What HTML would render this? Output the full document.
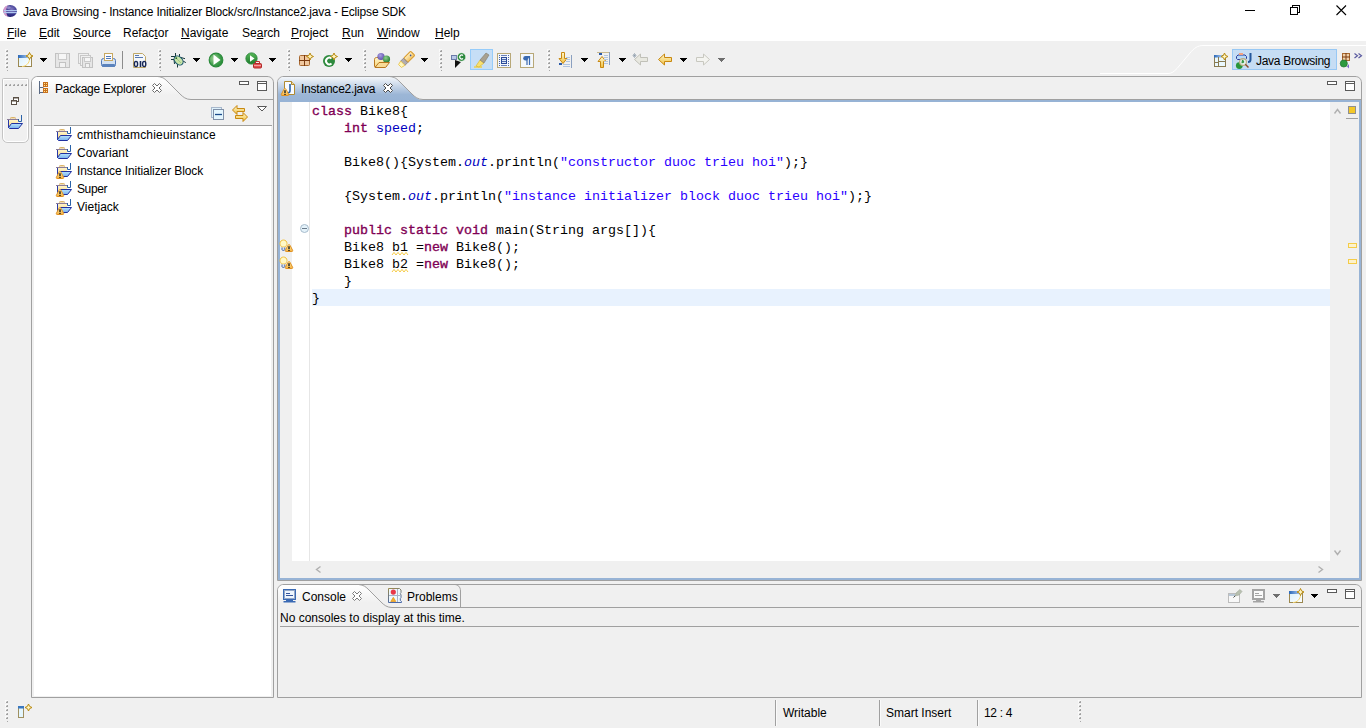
<!DOCTYPE html>
<html><head><meta charset="utf-8">
<style>
*{box-sizing:border-box}
html,body{margin:0;padding:0}
body{width:1366px;height:728px;background:#f0f0f0;position:relative;overflow:hidden;font-family:"Liberation Sans",sans-serif;font-size:12px;color:#000}
.a{position:absolute}
.t{position:absolute;white-space:pre;line-height:14px;height:14px}
.m{position:absolute;white-space:pre;font-family:"Liberation Mono",monospace;font-size:13.333px;line-height:17px;height:17px;color:#000}
.u{text-decoration:underline;text-underline-offset:1px}
.kw{color:#7f0055;-webkit-text-stroke:0.35px #7f0055}
.fld{color:#0000c0}
.str{color:#2a00ff}
.it{font-style:italic}
svg{position:absolute;overflow:visible}
</style></head><body>
<!-- title + menu -->
<div class="a" style="left:0;top:0;width:1366px;height:41px;background:#fff"></div>
<div class="t" id="title" style="left:23px;top:5px;letter-spacing:-0.16px">Java Browsing - Instance Initializer Block/src/Instance2.java - Eclipse SDK</div>

<div class="t" style="left:7px;top:26px"><span class="u">F</span>ile</div>
<div class="t" style="left:39px;top:26px"><span class="u">E</span>dit</div>
<div class="t" style="left:73px;top:26px"><span class="u">S</span>ource</div>
<div class="t" style="left:123px;top:26px">Refac<span class="u">t</span>or</div>
<div class="t" style="left:181px;top:26px"><span class="u">N</span>avigate</div>
<div class="t" style="left:242px;top:26px">Se<span class="u">a</span>rch</div>
<div class="t" style="left:291px;top:26px"><span class="u">P</span>roject</div>
<div class="t" style="left:342px;top:26px"><span class="u">R</span>un</div>
<div class="t" style="left:377px;top:26px"><span class="u">W</span>indow</div>
<div class="t" style="left:435px;top:26px"><span class="u">H</span>elp</div>

<!-- window controls -->
<div class="a" style="left:1245px;top:10px;width:10px;height:1px;background:#000"></div>
<div class="a" style="left:1292px;top:5px;width:8px;height:8px;border:1px solid #000"></div>
<div class="a" style="left:1290px;top:7px;width:8px;height:8px;border:1px solid #000;background:#fff"></div>
<svg style="left:1336px;top:5px" width="10" height="10"><path d="M0.5 0.5L10 10M10 0.5L0.5 10" stroke="#000" stroke-width="1.1"/></svg>

<!-- perspective bar white outline -->
<svg style="left:0;top:0" width="1366" height="80">
<defs><linearGradient id="wl" x1="0" x2="1"><stop offset="0" stop-color="#fff" stop-opacity="0"/><stop offset="1" stop-color="#fff"/></linearGradient></defs>
<path d="M880 73.5H1100" stroke="url(#wl)" fill="none"/>
<path d="M1100 73.5H1168C1172 73.5 1174 71.5 1177 68.5L1190 53C1194 48 1198 45.5 1203 45.5H1366" stroke="#fff" fill="none"/>
</svg>

<!-- VIEWS -->
<svg style="left:0;top:0" width="1366" height="728">
<defs>
<linearGradient id="gw" x1="0" y1="0" x2="0" y2="1"><stop offset="0" stop-color="#fff"/><stop offset="0.15" stop-color="#fdfdfd"/><stop offset="0.8" stop-color="#f0f0f0"/></linearGradient>
<linearGradient id="gb" x1="0" y1="0" x2="0" y2="1"><stop offset="0" stop-color="#f4f7fb"/><stop offset="0.7" stop-color="#9cb6d6"/><stop offset="1" stop-color="#97b3d5"/></linearGradient>
</defs>
<!-- trim stack -->
<path d="M2.5 79.5Q2.5 78.5 3.5 78.5H27.5Q28.5 78.5 28.5 79.5V137C28.5 140.5 26.5 142.5 23 142.5H8C4.5 142.5 2.5 140.5 2.5 137Z" fill="#f0f0f0" stroke="#c4c4c4"/>
<path d="M3.5 79.5H27.5V137C27.5 140 25.5 141.5 23 141.5H8C5.5 141.5 3.5 140 3.5 137Z" fill="none" stroke="#fff"/>

<!-- Package explorer -->
<path d="M31.5 697.5V83C31.5 79 34 76.5 38 76.5H267C271 76.5 273.5 79 273.5 83V697.5Z" fill="#f0f0f0" stroke="#a0a0a0"/>
<path d="M32 100V83C32 79.5 34.5 77 38 77H158C163 77 165 79 168 82L180 94C183 97 186 99 191 99H32Z" fill="url(#gw)"/>
<path d="M157.5 76.5C163 77 165 79 168 82L180 94C183 97 186 99.5 191 99.5H273" fill="none" stroke="#a0a0a0"/>
<rect x="34" y="125" width="237" height="571" fill="#fff"/>
<path d="M34 125.5H272" stroke="#a0a0a0"/>

<!-- Editor -->
<path d="M277.5 580.5V83C277.5 79 280 76.5 284 76.5H1355C1359 76.5 1361.5 79 1361.5 83V580.5Z" fill="#f0f0f0" stroke="#a0a0a0"/>
<path d="M278 102V83C278 79.5 280.5 77 284 77H390C395 77 397 79 400 82L412 94C415 97 418 100 423 100H278Z" fill="url(#gb)"/>
<path d="M389.5 76.5C395 77 397 79 400 82L412 94C415 97 418 99.5 423 99.5H1361" fill="none" stroke="#a0a0a0"/>
<rect x="278" y="100" width="1083" height="2" fill="#97b3d5"/>
<rect x="278" y="100" width="2" height="480" fill="#97b3d5"/>
<rect x="1359" y="100" width="2" height="480" fill="#97b3d5"/>
<rect x="278" y="578" width="1083" height="2" fill="#97b3d5"/>
<rect x="292" y="102" width="1038" height="459" fill="#fff"/>
<rect x="309" y="102" width="1" height="459" fill="#e6e6e6"/>
<rect x="312" y="289" width="1018" height="17" fill="#e8f2fe"/>

<!-- Console -->
<path d="M277.5 697.5V591C277.5 587 280 584.5 284 584.5H1355C1359 584.5 1361.5 587 1361.5 591V697.5Z" fill="#f0f0f0" stroke="#a0a0a0"/>
<path d="M278 607V591C278 587.5 280.5 585 284 585H359C364 585 366 587 369 590L381 602C384 605 387 607 392 607H278Z" fill="url(#gw)"/>
<path d="M358.5 584.5C364 585 366 587 369 590L381 602C384 605 387 607.5 392 607.5H1361" fill="none" stroke="#a0a0a0"/>
<path d="M380 584.5H454.5C458 584.5 460.5 587 460.5 591V607" fill="none" stroke="#a0a0a0"/>
<path d="M280 626.5H1359" stroke="#a0a0a0"/>
</svg>

<div class="t" style="left:55px;top:82px;letter-spacing:-0.25px">Package Explorer</div>

<!-- tree -->
<div class="t" style="left:77px;top:128px;letter-spacing:0.18px">cmthisthamchieuinstance</div>
<div class="t" style="left:77px;top:146px">Covariant</div>
<div class="t" style="left:77px;top:164px;letter-spacing:-0.1px">Instance Initializer Block</div>
<div class="t" style="left:77px;top:182px;letter-spacing:-0.4px">Super</div>
<div class="t" style="left:77px;top:200px">Vietjack</div>

<div class="t" style="left:301px;top:82px;letter-spacing:-0.22px">Instance2.java</div>

<!-- code -->
<div class="m" style="left:312px;top:103px"><span class="kw">class</span> Bike8{</div>
<div class="m" style="left:312px;top:120px">    <span class="kw">int</span> <span class="fld">speed</span>;</div>
<div class="m" style="left:312px;top:154px">    Bike8(){System.<span class="fld it">out</span>.println(<span class="str">"constructor duoc trieu hoi"</span>);}</div>
<div class="m" style="left:312px;top:188px">    {System.<span class="fld it">out</span>.println(<span class="str">"instance initializer block duoc trieu hoi"</span>);}</div>
<div class="m" style="left:312px;top:222px">    <span class="kw">public</span> <span class="kw">static</span> <span class="kw">void</span> main(String args[]){</div>
<div class="m" style="left:312px;top:239px">    Bike8 b1 =<span class="kw">new</span> Bike8();</div>
<div class="m" style="left:312px;top:256px">    Bike8 b2 =<span class="kw">new</span> Bike8();</div>
<div class="m" style="left:312px;top:273px">    }</div>
<div class="m" style="left:312px;top:290px">}</div>

<div class="t" style="left:302px;top:590px">Console</div>
<div class="t" style="left:407px;top:590px">Problems</div>
<div class="t" style="left:280px;top:611px">No consoles to display at this time.</div>

<!-- status bar -->
<div class="a" style="left:775px;top:700px;width:1px;height:26px;background:#a0a0a0"></div><div class="a" style="left:776px;top:700px;width:1px;height:26px;background:#fafafa"></div>
<div class="a" style="left:879px;top:700px;width:1px;height:26px;background:#a0a0a0"></div><div class="a" style="left:880px;top:700px;width:1px;height:26px;background:#fafafa"></div>
<div class="a" style="left:977px;top:700px;width:1px;height:26px;background:#a0a0a0"></div><div class="a" style="left:978px;top:700px;width:1px;height:26px;background:#fafafa"></div>
<div class="t" style="left:783px;top:706px">Writable</div>
<div class="t" style="left:886px;top:706px">Smart Insert</div>
<div class="t" style="left:984px;top:706px;letter-spacing:-0.3px">12 : 4</div>

<!-- perspective -->
<div class="a" style="left:1232px;top:49px;width:105px;height:21px;background:#c6ddf4;border:1px solid #98c8f4"></div>
<div class="t" style="left:1256px;top:54px;letter-spacing:-0.3px">Java Browsing</div>
<!--ICONS1-->
<svg style="left:0;top:0" width="1366" height="728">
<defs>
<radialGradient id="ecl" cx="0.6" cy="0.35" r="0.75"><stop offset="0" stop-color="#8078c0"/><stop offset="0.55" stop-color="#3a3890"/><stop offset="1" stop-color="#151565"/></radialGradient>
<linearGradient id="nwf" x1="0" y1="0" x2="1" y2="1"><stop offset="0" stop-color="#d8f0fc"/><stop offset="1" stop-color="#ffffff"/></linearGradient>
<linearGradient id="nwb" x1="0" x2="1"><stop offset="0" stop-color="#2a68b8"/><stop offset="1" stop-color="#a8c8f0"/></linearGradient>
<radialGradient id="grn2" cx="0.35" cy="0.4" r="0.7"><stop offset="0" stop-color="#9ad090"/><stop offset="0.7" stop-color="#3a9a48"/><stop offset="1" stop-color="#238a33"/></radialGradient>
<radialGradient id="purp" cx="0.4" cy="0.35" r="0.7"><stop offset="0" stop-color="#a8a0e0"/><stop offset="1" stop-color="#5a4aa8"/></radialGradient>
<radialGradient id="grn3" cx="0.4" cy="0.35" r="0.7"><stop offset="0" stop-color="#90d090"/><stop offset="1" stop-color="#1e7a2e"/></radialGradient>
<linearGradient id="penb" x1="0" x2="1"><stop offset="0" stop-color="#fff0c0"/><stop offset="1" stop-color="#f0c060"/></linearGradient>
<linearGradient id="pbst" x1="0" y1="0" x2="0.3" y2="1"><stop offset="0" stop-color="#9a8a50"/><stop offset="1" stop-color="#4a68a8"/></linearGradient>
<linearGradient id="grn" x1="0" y1="0" x2="0" y2="1"><stop offset="0" stop-color="#58b858"/><stop offset="1" stop-color="#1c7a2c"/></linearGradient>
<linearGradient id="yel" x1="0" y1="0" x2="0" y2="1"><stop offset="0" stop-color="#fff8d0"/><stop offset="1" stop-color="#f0c040"/></linearGradient>
<linearGradient id="fold" x1="0" y1="0" x2="0" y2="1"><stop offset="0" stop-color="#fff4c8"/><stop offset="1" stop-color="#f8d880"/></linearGradient>
<linearGradient id="fblue" x1="0" y1="0" x2="0" y2="1"><stop offset="0" stop-color="#b8e4ff"/><stop offset="1" stop-color="#78b0ec"/></linearGradient>
<linearGradient id="wg" x1="0" y1="0" x2="0" y2="1"><stop offset="0" stop-color="#fff4b0"/><stop offset="1" stop-color="#f4b040"/></linearGradient>
<symbol id="dd" overflow="visible"><path d="M0 0h7v1h-1v1h-1v1h-1v1h-1v-1h-1v-1h-1v-1h-1z" fill="#000"/></symbol>
<symbol id="ddg" overflow="visible"><path d="M0 0h7v1h-1v1h-1v1h-1v1h-1v-1h-1v-1h-1v-1h-1z" fill="#6e6e6e"/></symbol>
<symbol id="grip" overflow="visible"><g><rect x="-1" y="-1" width="3" height="1" fill="#fafafa"/><rect x="-1" y="0" width="1" height="2" fill="#fafafa"/><rect x="0" y="0" width="1" height="1" fill="#d8d8d8"/><rect x="1" y="0" width="1" height="1" fill="#a8a8a8"/><rect x="0" y="1" width="2" height="1" fill="#a0a0a0"/><rect x="-1" y="3" width="3" height="1" fill="#fafafa"/><rect x="-1" y="4" width="1" height="2" fill="#fafafa"/><rect x="0" y="4" width="1" height="1" fill="#d8d8d8"/><rect x="1" y="4" width="1" height="1" fill="#a8a8a8"/><rect x="0" y="5" width="2" height="1" fill="#a0a0a0"/><rect x="-1" y="7" width="3" height="1" fill="#fafafa"/><rect x="-1" y="8" width="1" height="2" fill="#fafafa"/><rect x="0" y="8" width="1" height="1" fill="#d8d8d8"/><rect x="1" y="8" width="1" height="1" fill="#a8a8a8"/><rect x="0" y="9" width="2" height="1" fill="#a0a0a0"/><rect x="-1" y="11" width="3" height="1" fill="#fafafa"/><rect x="-1" y="12" width="1" height="2" fill="#fafafa"/><rect x="0" y="12" width="1" height="1" fill="#d8d8d8"/><rect x="1" y="12" width="1" height="1" fill="#a8a8a8"/><rect x="0" y="13" width="2" height="1" fill="#a0a0a0"/><rect x="-1" y="15" width="3" height="1" fill="#fafafa"/><rect x="-1" y="16" width="1" height="2" fill="#fafafa"/><rect x="0" y="16" width="1" height="1" fill="#d8d8d8"/><rect x="1" y="16" width="1" height="1" fill="#a8a8a8"/><rect x="0" y="17" width="2" height="1" fill="#a0a0a0"/><rect x="1" y="20" width="1" height="1" fill="#a8a8a8"/></g></symbol>
<symbol id="nw" overflow="visible">
<rect x="0.5" y="2.5" width="13" height="11" fill="url(#nwf)" stroke="#9c8850"/>
<rect x="0" y="2" width="11" height="3" fill="url(#nwb)"/>
<path d="M4 13.5C8 13.5 11.5 10 11.5 6" stroke="#f8d870" fill="none" stroke-width="1"/>
<path d="M11.5 -0.5L12.6 1.9L15.0 3L12.6 4.1L11.5 6.5L10.4 4.1L8.0 3L10.4 1.9Z" fill="#fff4c0" stroke="#b88a10" stroke-width="1" stroke-linejoin="round"/>
</symbol>
<symbol id="warn" overflow="visible">
<path d="M4 0.5C4.5 0.5 4.8 1 5.2 1.6L7.6 6.3C7.9 7 7.6 7.5 6.9 7.5H1.1C0.4 7.5 0.1 7 0.4 6.3L2.8 1.6C3.2 1 3.5 0.5 4 0.5Z" fill="url(#wg)" stroke="#e09020"/>
<rect x="3.3" y="2.2" width="1.4" height="2.8" fill="#1a1a1a"/>
<rect x="3.3" y="5.8" width="1.4" height="1.2" fill="#1a1a1a"/>
</symbol>
<symbol id="jprj" overflow="visible">
<rect x="3.5" y="2.5" width="5" height="1.5" rx="0.7" fill="#fff" stroke="#dcb468"/>
<rect x="0" y="4" width="11" height="1" fill="#8a7c98"/>
<rect x="2" y="5" width="9" height="7" fill="url(#fold)"/>
<rect x="1" y="5" width="1" height="8" fill="#2838a8"/>
<path d="M4.5 8.5H15.5L11.5 13.5H2.5L1.5 12.5Z" fill="url(#fblue)" stroke="#2030a0" stroke-linejoin="round"/>
<path d="M14.5 0V6.5H11.5V4" stroke="#2a62a8" fill="none" stroke-linejoin="round"/>
</symbol>
<symbol id="minb" overflow="visible"><rect x="0.5" y="0.5" width="9" height="3" fill="#fff" stroke="#5a5a5a"/></symbol>
<symbol id="maxb" overflow="visible"><rect x="0.5" y="0.5" width="9" height="9" fill="#fff" stroke="#5a5a5a"/><rect x="1" y="2" width="8" height="1" fill="#5a5a5a"/></symbol>
</defs>

<!-- eclipse logo -->
<ellipse cx="10.2" cy="11" rx="6.8" ry="6.1" fill="url(#ecl)"/>
<path d="M8.5 5C5 5.8 3.3 8.3 3.3 11C3.3 13.7 5 16.2 8.5 17C6.8 15.5 6.2 13.3 6.2 11C6.2 8.7 6.8 6.5 8.5 5Z" fill="#e4a0d0" opacity="0.9"/>
<ellipse cx="8.5" cy="7.6" rx="2.2" ry="1.4" fill="#b8b0e0" opacity="0.6"/>
<rect x="4" y="10" width="13" height="1.2" fill="#b0c8f0"/>
<rect x="4" y="12" width="13" height="1.2" fill="#b0c8f0"/>

<!-- toolbar grips -->
<use href="#grip" x="6" y="50"/>
<use href="#grip" x="159" y="50"/>
<use href="#grip" x="288" y="50"/>
<use href="#grip" x="364" y="50"/>
<use href="#grip" x="440" y="50"/>
<use href="#grip" x="548" y="50"/>

<!-- new wizard -->
<use href="#nw" x="18" y="53"/>
<use href="#dd" x="40" y="58"/>
<!-- save disabled -->
<rect x="55.5" y="53.5" width="14" height="14" fill="#e6e6e6" stroke="#c2c2c2"/>
<rect x="58.5" y="53.5" width="8" height="6" fill="#f6f6f6" stroke="#cacaca"/>
<rect x="59.5" y="62.5" width="6" height="5" fill="#f2f2f2" stroke="#c2c2c2"/>
<!-- save all disabled -->
<rect x="78.5" y="53.5" width="10" height="10" fill="#f0f0f0" stroke="#c8c8c8"/>
<rect x="80.5" y="55.5" width="10" height="10" fill="#f0f0f0" stroke="#c8c8c8"/>
<rect x="82.5" y="57.5" width="10" height="10" fill="#e6e6e6" stroke="#c2c2c2"/>
<rect x="84.5" y="57.5" width="6" height="4" fill="#f6f6f6" stroke="#cacaca"/>
<rect x="85.5" y="63.5" width="4" height="4" fill="#f2f2f2" stroke="#c2c2c2"/>
<!-- print -->
<rect x="101.5" y="58.5" width="14" height="8" rx="2" fill="#d4e2f2" stroke="#5078b8"/>
<rect x="102" y="64" width="13" height="3" rx="1" fill="#5a82bc"/>
<rect x="104.5" y="53.5" width="8" height="7" fill="#fbfcff" stroke="#c8a860"/>
<path d="M106 56.5h5M106 58.5h5" stroke="#5078b8"/>
<!-- separator -->
<rect x="122" y="51" width="1" height="18" fill="#8c8c8c"/>
<!-- 010 -->
<path d="M133.5 53.5h9l3 3v11h-12z" fill="#f4f8fc" stroke="#c0a868"/>
<path d="M135 55.5h4M135 57.5h8" stroke="#5878b0"/>
<ellipse cx="136" cy="64" rx="1.6" ry="2.6" fill="none" stroke="#182858" stroke-width="1.4"/><path d="M140.5 61v6" stroke="#182858" stroke-width="1.6"/><ellipse cx="144.2" cy="64" rx="1.6" ry="2.6" fill="none" stroke="#182858" stroke-width="1.4"/>
<!-- bug -->
<g stroke="#1a3a3a" stroke-width="1" fill="none">
<path d="M175.5 53v4M171 56.5h5M171 59.5h3l0.5 4.5M177.5 64v3.5M179.5 54v3M181 57.5l4 1.2M183 61l2.8 1.6"/>
</g>
<ellipse cx="178.6" cy="60.5" rx="5.2" ry="3.6" transform="rotate(45 178.6 60.5)" fill="#c8e4a8" stroke="#1e5a70" stroke-width="1.1"/>
<path d="M177 59l4 4" stroke="#98c080" stroke-width="0.8"/>
<circle cx="176.3" cy="58.2" r="0.9" fill="#2a6a2a"/>
<use href="#dd" x="193" y="58"/>
<!-- run -->
<circle cx="216" cy="60" r="6.8" fill="url(#grn2)" stroke="#2a8a3a" stroke-width="1.2"/>
<path d="M213.5 54.5L220.5 60L213.5 65Z" fill="#fff"/>
<use href="#dd" x="231" y="58"/>
<!-- external tools -->
<circle cx="251.5" cy="58.5" r="5.6" fill="url(#grn)" stroke="#2a8a3a"/>
<path d="M250 55.3L254.5 58.5L250 61.7Z" fill="#fff"/>
<path d="M255.5 63.5v-2h4v2" stroke="#c03030" fill="none"/>
<rect x="253.5" y="63.5" width="8" height="4.5" rx="1" fill="#e05050" stroke="#b02828"/>
<path d="M254 65.5h7" stroke="#f8b0b0" stroke-width="0.8"/>
<use href="#dd" x="269" y="58"/>
<!-- new package -->
<rect x="299.5" y="55.5" width="10" height="10" rx="1" fill="#f0c8a0" stroke="#a86830"/>
<path d="M299 60.5h11M304.5 55v11" stroke="#7a3a10"/>
<path d="M310 53.0L311.1 55.4L313.5 56.5L311.1 57.6L310 60.0L308.9 57.6L306.5 56.5L308.9 55.4Z" fill="#fff4c0" stroke="#b88a10" stroke-width="1" stroke-linejoin="round"/>
<!-- new class -->
<circle cx="329" cy="61" r="6" fill="#2e8a3e"/>
<path d="M331.5 58.5A3.3 3.3 0 1 0 331.5 63.5" stroke="#fff" stroke-width="2" fill="none"/>
<path d="M334 53.0L335.1 55.4L337.5 56.5L335.1 57.6L334 60.0L332.9 57.6L330.5 56.5L332.9 55.4Z" fill="#fff4c0" stroke="#b88a10" stroke-width="1" stroke-linejoin="round"/>
<use href="#dd" x="345" y="58"/>
<!-- open type -->
<path d="M374.5 66.5V59.5C374.5 58.3 375.3 57.5 376.5 57.5H386.5V66.5Z" fill="url(#fold)" stroke="#b87820"/>
<circle cx="381" cy="56.5" r="3.6" fill="url(#purp)"/>
<circle cx="386.5" cy="59" r="3.6" fill="url(#grn3)"/>
<path d="M375 67.5L379 62.5H389.5L385.5 67.5Z" fill="#f8dc98" stroke="#b87820" stroke-linejoin="round"/>
<!-- search pen -->
<g transform="rotate(45 406 60)">
<rect x="403" y="50.5" width="6" height="10" rx="1" fill="url(#penb)" stroke="#d89828"/>
<rect x="403" y="60.5" width="6" height="4" fill="#b0acb0" stroke="#8a8080" stroke-width="0.8"/>
<path d="M403 64.5h6l-1 4h-4z" fill="#fff8c0" stroke="#e8c040" stroke-width="0.8"/>
<circle cx="406" cy="53.5" r="0.8" fill="#3050a0"/>
</g>
<use href="#dd" x="421" y="58"/>
<!-- type hierarchy -->
<rect x="451.5" y="55.5" width="5" height="4" fill="#b8c8e8" stroke="#6a7aa8"/>
<path d="M455 60L455 68L461 62Z" fill="#111"/>
<circle cx="461.5" cy="57" r="4.3" fill="#2e8a3e" stroke="#fff" stroke-width="0.6"/>
<path d="M463 55.5A2 2 0 1 0 463 58.5" stroke="#fff" stroke-width="1.3" fill="none"/>
<!-- highlight toggle -->
<rect x="470.5" y="49.5" width="22" height="20" fill="#c6def6" stroke="#96ccfa"/>
<path d="M474 67h8" stroke="#f0d040" stroke-width="1.4"/>
<path d="M476 66l4-6 4 3-5 4z" fill="#f8e070" stroke="#d8b020" stroke-width="0.6"/>
<path d="M480 60l6-7 3 2-5 8z" fill="#a8a090" stroke="#807868" stroke-width="0.6"/>
<!-- block selection -->
<rect x="497.5" y="53.5" width="13" height="14" fill="#f4f8fc" stroke="#b8a878"/>
<g fill="#4a64a8"><rect x="499" y="55" width="1" height="1"/><rect x="499" y="57" width="1" height="1"/><rect x="499" y="59" width="1" height="1"/><rect x="499" y="61" width="1" height="1"/><rect x="499" y="63" width="1" height="1"/><rect x="499" y="65" width="1" height="1"/><rect x="508" y="55" width="1" height="1"/><rect x="508" y="57" width="1" height="1"/><rect x="508" y="59" width="1" height="1"/><rect x="508" y="61" width="1" height="1"/><rect x="508" y="63" width="1" height="1"/><rect x="508" y="65" width="1" height="1"/></g>
<rect x="501" y="55" width="6" height="1" fill="#6a80b8"/><rect x="501" y="65" width="6" height="1" fill="#6a80b8"/>
<rect x="501.5" y="57.5" width="5" height="6" fill="#dce6f4" stroke="#2a4a98"/>
<path d="M502 59.5h4M502 61.5h4" stroke="#2a4a98" stroke-width="0.8"/>
<!-- pilcrow -->
<rect x="520.5" y="53.5" width="13" height="14" fill="#f4f8fc" stroke="#b8a878"/>
<path d="M527 56v9M529.5 56v9" stroke="#3a6ab0" stroke-width="1.2"/>
<path d="M530 56h-4.5a2.3 2.3 0 0 0 0 4.6h1.5z" fill="#3a6ab0"/>
<!-- next annotation -->
<path d="M561.5 52.5h3v6h2.5l-4 5l-4 -5h2.5z" fill="url(#yel)" stroke="#c88810"/>
<path d="M571.5 55v13" stroke="#8aa0c0"/>
<path d="M566 57.5h4M566 59.5h4M566 61.5h4M563 64.5h7M563 66.5h7" stroke="#b0c4e0"/>
<rect x="559" y="63" width="3" height="2" fill="#2a5aa8"/>
<use href="#dd" x="581" y="58"/>
<!-- prev annotation -->
<path d="M600.5 67.5h3v-6h2.5l-4 -5l-4 5h2.5z" fill="url(#yel)" stroke="#c88810"/>
<path d="M609.5 52v13" stroke="#8aa0c0"/>
<path d="M604 55.5h4M604 57.5h4M604 59.5h4M604 61.5h4M604 63.5h4" stroke="#b0c4e0"/>
<path d="M597 52.5h12" stroke="#c8b890"/>
<rect x="599" y="53" width="3" height="2" fill="#2a5aa8"/>
<use href="#dd" x="619" y="58"/>
<!-- last edit -->
<path d="M647.5 57.5h-7v-3.5l-6 5.5 6 5.5v-3.5h7z" fill="#e8e8e0" stroke="#c0c0b8"/>
<path d="M633 54l3 3M636 54l-3 3M634.5 53v5M632.5 55.5h4" stroke="#8a98a8" stroke-width="0.6"/>
<!-- back -->
<path d="M671.5 57.5h-7v-3.5l-6 5.5 6 5.5v-3.5h7z" fill="url(#yel)" stroke="#c88810"/>
<use href="#dd" x="680" y="58"/>
<!-- forward disabled -->
<path d="M696.5 57.5h7v-3.5l6 5.5-6 5.5v-3.5h-7z" fill="#f4f4f0" stroke="#c8c8c0"/>
<use href="#ddg" x="718" y="58"/>
</svg>

<!--/ICONS1-->
<!--ICONS2-->
<svg style="left:0;top:0" width="1366" height="728">
<!-- perspective: open perspective -->
<rect x="1214.5" y="55.5" width="11" height="11" fill="#eaf8fe" stroke="#8a7a50"/>
<rect x="1214" y="55" width="8" height="2.5" fill="url(#nwb)"/>
<path d="M1218.5 57v10M1219 61.5h6.5M1214 62.5h4.5" stroke="#8a7a50"/>
<path d="M1224.5 53L1225.6 55.4L1228 56.5L1225.6 57.6L1224.5 60L1223.4 57.6L1221 56.5L1223.4 55.4Z" fill="#fff4c0" stroke="#b88a10" stroke-width="1" stroke-linejoin="round"/>
<!-- java browsing icon -->
<path d="M1236.5 56.5L1238 55H1245L1246.5 56.5V58.5L1245.5 59.5H1237.5L1236.5 58.5Z" fill="#b4d8f8" stroke="#2a3a98" stroke-width="1"/>
<rect x="1239" y="53" width="4" height="2" fill="#f4a080"/>
<path d="M1250.5 53v6.5c0 1.5-1 2.5-2.5 2.5" stroke="#24589c" stroke-width="2" fill="none"/>
<circle cx="1239.3" cy="65.6" r="3.4" fill="#28963a"/>
<circle cx="1243" cy="62" r="3.4" fill="#eef6ee" fill-opacity="0.85" stroke="#b8ac80" stroke-width="1.1"/>
<path d="M1242 59.8c1.5 0 2.2 1 2.2 2.4c-0.8 1.2-2 1.2-2.8 0.6z" fill="#3a9a48"/>
<path d="M1245.3 64.3l3.2 3.2" stroke="#8a4a2a" stroke-width="1.5"/>
<!-- next perspective -->
<rect x="1342.5" y="53.5" width="7" height="7" fill="#f0d0a8" stroke="#a86830"/>
<path d="M1342 57h8M1346 53v8" stroke="#7a3a10"/>
<circle cx="1343.8" cy="63.5" r="3.6" fill="#2e9a3e" stroke="#1a6a2a" stroke-width="0.6"/>
<path d="M1349 64l-2 2.5 2 2z" fill="#7a6ac8"/>
<path d="M1354.5 53.5l3 2.3-3 2.3M1358.5 53.5l3 2.3-3 2.3" stroke="#5a5aa0" stroke-width="1.2" fill="none"/>

<!-- trim stack -->
<g><rect x="5" y="84" width="1" height="1" fill="#d8d8d8"/><rect x="6" y="84" width="1" height="1" fill="#a8a8a8"/><rect x="5" y="85" width="2" height="1" fill="#a0a0a0"/><rect x="9" y="84" width="1" height="1" fill="#d8d8d8"/><rect x="10" y="84" width="1" height="1" fill="#a8a8a8"/><rect x="9" y="85" width="2" height="1" fill="#a0a0a0"/><rect x="13" y="84" width="1" height="1" fill="#d8d8d8"/><rect x="14" y="84" width="1" height="1" fill="#a8a8a8"/><rect x="13" y="85" width="2" height="1" fill="#a0a0a0"/><rect x="17" y="84" width="1" height="1" fill="#d8d8d8"/><rect x="18" y="84" width="1" height="1" fill="#a8a8a8"/><rect x="17" y="85" width="2" height="1" fill="#a0a0a0"/><rect x="21" y="84" width="1" height="1" fill="#d8d8d8"/><rect x="22" y="84" width="1" height="1" fill="#a8a8a8"/><rect x="21" y="85" width="2" height="1" fill="#a0a0a0"/><rect x="25" y="84" width="1" height="1" fill="#d8d8d8"/><rect x="26" y="84" width="1" height="1" fill="#a8a8a8"/><rect x="25" y="85" width="2" height="1" fill="#a0a0a0"/></g>
<rect x="13.5" y="97.5" width="5" height="4" fill="#fff" stroke="#5a5046"/>
<rect x="13" y="97" width="6" height="1.5" fill="#5a5046"/>
<rect x="11.5" y="100.5" width="5" height="4" fill="#fff" stroke="#5a5046"/>
<rect x="11" y="100" width="6" height="1.5" fill="#5a5046"/>
<use href="#jprj" x="7" y="115"/>

<!-- Package Explorer tab -->
<path d="M39.5 81v13M39.5 87.5h4M39.5 92.5h4" stroke="#5a6a84"/>
<rect x="43" y="82" width="5" height="5" fill="#c8701e"/>
<rect x="43" y="88" width="5" height="5" fill="#c8701e"/>
<g fill="#ffe890"><rect x="44" y="83" width="1" height="1"/><rect x="46" y="83" width="1" height="1"/><rect x="44" y="85" width="1" height="1"/><rect x="46" y="85" width="1" height="1"/><rect x="44" y="89" width="1" height="1"/><rect x="46" y="89" width="1" height="1"/><rect x="44" y="91" width="1" height="1"/><rect x="46" y="91" width="1" height="1"/></g>
<g transform="translate(152,83)"><path d="M0.5 2.5L2.5 0.5L5 3L7.5 0.5L9.5 2.5L7 5L9.5 7.5L7.5 9.5L5 7L2.5 9.5L0.5 7.5L3 5Z" fill="#fff" stroke="#6a6a6a" stroke-linejoin="round"/></g>
<use href="#minb" x="239" y="81"/>
<use href="#maxb" x="257" y="81"/>
<!-- PE toolbar -->
<rect x="211.5" y="107.5" width="10" height="10" fill="#dff2fc" stroke="#a8b8cc"/>
<rect x="213.5" y="109.5" width="10" height="10" fill="#e4f6fe" stroke="#8090a8"/>
<path d="M215 114.5h7" stroke="#1a4a8a" stroke-width="1.3"/>
<path d="M244.5 108.5h-7.5v-3l-4.5 4.5 4.5 4.5v-3h7.5z" fill="url(#yel)" stroke="#c88810" stroke-linejoin="round"/>
<path d="M235.5 115.5h7.5v-3l4.5 4.5-4.5 4.5v-3h-7.5z" fill="url(#yel)" stroke="#c88810" stroke-linejoin="round"/>
<path d="M257.5 106.5h9l-4.5 4.5z" fill="#fff" stroke="#5a5a5a" stroke-linejoin="round"/>

<!-- tree icons -->
<use href="#jprj" x="56" y="127"/>
<use href="#jprj" x="56" y="145"/>
<use href="#jprj" x="56" y="163"/>
<use href="#warn" x="56" y="171"/>
<use href="#jprj" x="56" y="181"/>
<use href="#warn" x="56" y="189"/>
<use href="#jprj" x="56" y="199"/>
<use href="#warn" x="56" y="207"/>

<!-- Editor tab -->
<path d="M284.5 81.5h7l3 3v10h-10z" fill="#f8fbff" stroke="#b08a30"/>
<path d="M291.5 81.5v3h3" fill="#f0d8a0" stroke="#b08a30"/>
<path d="M290 84v6.5c0 1.5-1 2.5-2.5 2.5" stroke="#2a62a8" stroke-width="1.6" fill="none"/>
<use href="#warn" x="281" y="88"/>
<g transform="translate(383,83)"><path d="M0.5 2.5L2.5 0.5L5 3L7.5 0.5L9.5 2.5L7 5L9.5 7.5L7.5 9.5L5 7L2.5 9.5L0.5 7.5L3 5Z" fill="#fff" stroke="#4a4a4a" stroke-linejoin="round"/></g>
<use href="#minb" x="1327" y="81"/>
<use href="#maxb" x="1345" y="81"/>

<!-- fold -->
<circle cx="304.5" cy="228.5" r="4" fill="#e4f2fa" stroke="#a8bccc"/>
<path d="M302 228.5h5" stroke="#6a7a8a"/>
<!-- quickfix -->
<g id="qf">
<path d="M283.5 240C285.5 240 287 241.5 287 243.5C287 245 286 246 285.2 247H281.8C281 246 280 245 280 243.5C280 241.5 281.5 240 283.5 240Z" fill="#fff8c8" stroke="#f0c040"/>
<path d="M282 247.5v2.2c0 1 2.8 1 2.8 0v-2.2" fill="#d8e4f4" stroke="#3a5aa0" stroke-width="0.9"/>
</g>
<use href="#warn" x="285" y="244"/>
<use href="#qf" x="0" y="17"/>
<use href="#warn" x="285" y="261"/>
<!-- squiggles -->
<path d="M392 255l2-2.6 2 2.6 2-2.6 2 2.6 2-2.6 2 2.6 2-2.6 2 2.6" stroke="#f4c430" fill="none" stroke-width="0.9"/>
<path d="M392 272l2-2.6 2 2.6 2-2.6 2 2.6 2-2.6 2 2.6 2-2.6 2 2.6" stroke="#f4c430" fill="none" stroke-width="0.9"/>

<!-- overview ruler -->
<path d="M1334.5 113.5l3-4 3 4" stroke="#b0b0b0" stroke-width="1.4" fill="none"/>
<rect x="1348.5" y="106.5" width="7" height="7" fill="#f4c828" stroke="#909090"/>
<path d="M1346 118.5h12" stroke="#a0a0a0"/>
<rect x="1348.5" y="243.5" width="8" height="4" fill="#fdf2cc" stroke="#f4cc48"/>
<rect x="1348.5" y="259.5" width="8" height="4" fill="#fdf2cc" stroke="#f4cc48"/>
<path d="M1334.5 550.5l3 4 3-4" stroke="#b0b0b0" stroke-width="1.4" fill="none"/>
<path d="M320.5 566.5l-4 3 4 3" stroke="#b0b0b0" stroke-width="1.4" fill="none"/>
<path d="M1318.5 566.5l4 3-4 3" stroke="#b0b0b0" stroke-width="1.4" fill="none"/>

<!-- console tab -->
<rect x="283" y="589" width="13" height="11" fill="#3a6ab4"/>
<rect x="284.5" y="590.5" width="10" height="8" fill="#eef6fe" stroke="#94a8c8"/>
<path d="M286 593.5h4M286 595.5h7" stroke="#34549c"/>
<rect x="286" y="600" width="7" height="1" fill="#3a6ab4"/>
<rect x="283.5" y="601" width="12" height="1.5" fill="#3a6ab4"/>
<g transform="translate(352,591)"><path d="M0.5 2.5L2.5 0.5L5 3L7.5 0.5L9.5 2.5L7 5L9.5 7.5L7.5 9.5L5 7L2.5 9.5L0.5 7.5L3 5Z" fill="#fff" stroke="#7a7a7a" stroke-linejoin="round"/></g>
<!-- problems icon -->
<path d="M388.5 588.5H399.5L401 590V592.5L400.3 593.5L401 595V597.5L400.3 598.5V600.5L401.5 601.5V602.5H388.5Z" fill="#eef8fc" stroke="url(#pbst)"/>
<path d="M397.5 589v13M389 595.5h11" stroke="#a8b4c8"/>
<circle cx="393.3" cy="592.1" r="2.6" fill="#e83848"/>
<path d="M390.8 601.5L393.3 597.3L395.8 601.5Z" fill="#f4b030" stroke="#e09018" stroke-width="0.7" stroke-linejoin="round"/>
<!-- console toolbar -->
<rect x="1228.5" y="593.5" width="11" height="9" fill="#f8f8f8" stroke="#bcbcbc"/>
<rect x="1229" y="594" width="6" height="2" fill="#b8c8d8"/>
<path d="M1233.5 597.5l3 -3" stroke="#4a4a4a" stroke-width="1"/>
<path d="M1235 596l1.5-3.5 3.5-3 2 2-3 3.5z" fill="#b8c0b0" stroke="#a0a898" stroke-width="0.6"/>
<rect x="1252" y="589" width="13" height="11" fill="#a4a4a4"/>
<rect x="1254" y="591" width="9" height="7" fill="#fafafa"/>
<path d="M1255 593.5h4M1255 595.5h7" stroke="#a4a4a4"/>
<rect x="1256" y="600" width="5" height="1" fill="#a4a4a4"/>
<rect x="1253" y="601" width="11" height="1.5" fill="#a4a4a4"/>
<use href="#ddg" x="1273" y="594"/>
<use href="#nw" x="1289" y="589"/>
<use href="#dd" x="1311" y="594"/>
<use href="#minb" x="1327" y="589"/>
<use href="#maxb" x="1345" y="589"/>

<!-- status bar -->
<use href="#grip" x="6" y="701"/>
<use href="#grip" x="1079" y="701"/>
<rect x="18.5" y="706.5" width="5" height="11" fill="#e4f6fe" stroke="#a09060"/>
<rect x="18" y="706" width="6" height="2.5" fill="#3a78c0"/>
<path d="M28.5 704.0L29.6 706.4L32.0 707.5L29.6 708.6L28.5 711.0L27.4 708.6L25.0 707.5L27.4 706.4Z" fill="#fff4c0" stroke="#b88a10" stroke-width="1" stroke-linejoin="round"/>
</svg>

<!--/ICONS2-->
</body></html>
